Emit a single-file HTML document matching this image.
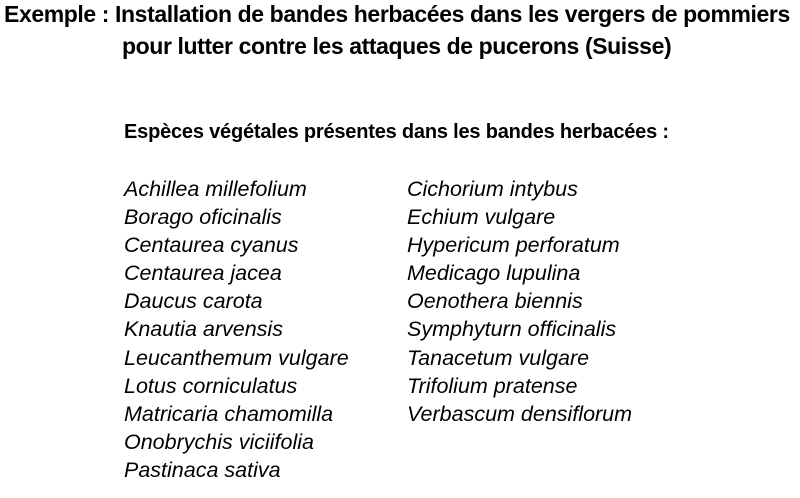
<!DOCTYPE html>
<html><head><meta charset="utf-8"><style>
html,body{margin:0;padding:0;background:#fff;}
body{width:800px;height:498px;position:relative;overflow:hidden;font-family:"Liberation Sans",sans-serif;color:#000;}
.t{position:absolute;white-space:nowrap;font-weight:bold;}
.i{position:absolute;white-space:nowrap;font-style:italic;font-size:21.5px;line-height:28.1px;}
</style></head><body>
<div class="t" style="left:4px;top:1px;font-size:23px;letter-spacing:-0.4px;">Exemple : Installation de bandes herbacées dans les vergers de pommiers</div>
<div class="t" style="left:122px;top:33px;font-size:23px;letter-spacing:-0.4px;">pour lutter contre les attaques de pucerons (Suisse)</div>
<div class="t" style="left:124px;top:121px;font-size:20px;letter-spacing:-0.2px;">Espèces végétales présentes dans les bandes herbacées :</div>
<div class="i" style="left:124px;top:175px;">Achillea millefolium<br>Borago oficinalis<br>Centaurea cyanus<br>Centaurea jacea<br>Daucus carota<br>Knautia arvensis<br>Leucanthemum vulgare<br>Lotus corniculatus<br>Matricaria chamomilla<br>Onobrychis viciifolia<br>Pastinaca sativa</div>
<div class="i" style="left:407px;top:175px;">Cichorium intybus<br>Echium vulgare<br>Hypericum perforatum<br>Medicago lupulina<br>Oenothera biennis<br>Symphyturn officinalis<br>Tanacetum vulgare<br>Trifolium pratense<br>Verbascum densiflorum</div>
</body></html>
